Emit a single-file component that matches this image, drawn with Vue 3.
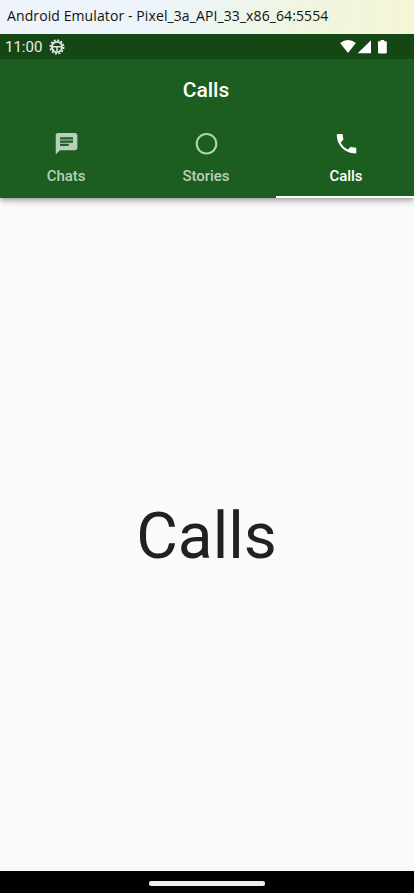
<script setup>
import { ref } from 'vue'

const tabs = ['Chats', 'Stories', 'Calls']
const active = ref('Calls')
</script>

<template>
  <div class="emulator">
    <div class="window-title">Android Emulator - Pixel_3a_API_33_x86_64:5554</div>

    <div class="status-bar">
      <span class="clock">11:00</span>
      <svg class="gear" viewBox="0 0 16 16">
        <circle cx="8" cy="8" r="6.7" fill="none" stroke="#e4ebe4" stroke-width="1.7" stroke-dasharray="2 1.508" />
        <circle cx="8" cy="8" r="5.1" fill="none" stroke="#e4ebe4" stroke-width="1.9" />
        <path d="M3.5 7.7h9M8 8v4" stroke="#e4ebe4" stroke-width="1.5" />
      </svg>
      <svg class="system" viewBox="0 0 48 16" fill="#fff">
        <path d="M0.1 4Q8-2.1 15.9 4L8 14Z" />
        <path d="M31 1.3V14.3H17.7Z" />
        <path d="M40.6 1h3.6v1.3h1.9q.7 0 .7.7v10.6q0 .8-.8.8h-7.2q-.8 0-.8-.8V3q0-.7.7-.7h1.9Z" />
      </svg>
    </div>

    <header class="app-bar">
      <h1 class="app-title">Calls</h1>
      <nav class="tabs">
        <button
          v-for="tab in tabs"
          :key="tab"
          class="tab"
          :class="{ active: tab === active }"
          @click="active = tab"
        >
          <svg class="tab-icon" viewBox="-0.5 0.25 24 24" fill="currentColor">
            <path v-if="tab === 'Chats'" d="M20 2H4c-1.1 0-1.99.9-1.99 2L2 22l4-4h14c1.1 0 2-.9 2-2V4c0-1.1-.9-2-2-2zM6 9h12v2H6V9zm8 5H6v-2h8v2zm4-6H6V6h12v2z" />
            <path v-else-if="tab === 'Stories'" d="M12 2C6.47 2 2 6.47 2 12s4.47 10 10 10 10-4.47 10-10S17.53 2 12 2zm0 18c-4.41 0-8-3.59-8-8s3.59-8 8-8 8 3.59 8 8-3.59 8-8 8z" />
            <path v-else d="M6.62 10.79c1.44 2.83 3.76 5.14 6.59 6.59l2.2-2.2c.27-.27.67-.36 1.02-.24 1.12.37 2.33.57 3.57.57.55 0 1 .45 1 1V20c0 .55-.45 1-1 1-9.39 0-17-7.61-17-17 0-.55.45-1 1-1h3.5c.55 0 1 .45 1 1 0 1.25.2 2.45.57 3.57.11.35.03.74-.25 1.02l-2.2 2.2z" />
          </svg>
          <span class="tab-label">{{ tab }}</span>
        </button>
      </nav>
    </header>

    <main class="content">{{ active }}</main>

    <footer class="nav-bar"><span class="handle"></span></footer>
  </div>
</template>

<style>
body {
  margin: 0;
}
</style>

<style scoped>
.emulator {
  display: flex;
  flex-direction: column;
  width: 414px;
  height: 893px;
  overflow: hidden;
  background: #fafafa;
  font-family: Roboto, sans-serif;
}
.window-title {
  box-sizing: border-box;
  flex: none;
  height: 34px;
  padding-left: 7px;
  line-height: 32px;
  font-family: "Open Sans", "Noto Sans", sans-serif;
  font-size: 14px;
  letter-spacing: 0.1px;
  white-space: nowrap;
  color: #111;
  background: linear-gradient(100deg, #f0f3fb 0%, #edf4fa 35%, #ecf6f1 52%, #f1f5e0 75%, #f5f5d6 100%);
}
.status-bar {
  box-sizing: border-box;
  flex: none;
  display: flex;
  align-items: center;
  height: 25px;
  padding: 0 26px 0 5px;
  background: #144714;
}
.clock {
  width: 44px;
  padding-top: 1px;
  font-size: 15px;
  color: #e8eee8;
}
.gear {
  width: 16px;
  height: 16px;
}
.system {
  width: 48px;
  height: 16px;
  margin-left: auto;
}
.app-bar {
  position: relative;
  flex: none;
  height: 139px;
  background: #1b5e20;
  box-shadow: 0 2px 4px -1px rgba(0, 0, 0, 0.2), 0 4px 5px rgba(0, 0, 0, 0.14), 0 1px 10px rgba(0, 0, 0, 0.12);
  clip-path: inset(0 0 -20px 0);
}
.app-title {
  height: 61px;
  margin: 0;
  padding-right: 2px;
  line-height: 62px;
  text-align: center;
  font-size: 21px;
  font-weight: 500;
  color: #fff;
}
.tabs {
  display: grid;
  grid-template-columns: repeat(3, 140px);
  height: 78px;
  margin-left: -4px;
}
.tab {
  display: flex;
  flex-direction: column;
  align-items: center;
  padding: 11px 0 0;
  border: 0;
  border-bottom: 2px solid transparent;
  background: none;
  font: 500 15px/18px Roboto, sans-serif;
  letter-spacing: -0.05px;
  color: #bacfbb;
}
.tab.active {
  color: #fff;
  border-bottom-color: #fff;
}
.tab-icon {
  width: 26px;
  height: 26px;
}
.tab-label {
  margin-top: 10px;
}
.content {
  flex: 1;
  display: flex;
  align-items: center;
  justify-content: center;
  padding: 3px 1px 0 0;
  font-size: 64px;
  color: #212121;
}
.nav-bar {
  box-sizing: border-box;
  flex: none;
  display: flex;
  justify-content: center;
  height: 22px;
  padding: 10px 1px 0 0;
  background: #000;
}
.handle {
  width: 116px;
  height: 5px;
  border-radius: 2px;
  background: #ececec;
}
</style>
